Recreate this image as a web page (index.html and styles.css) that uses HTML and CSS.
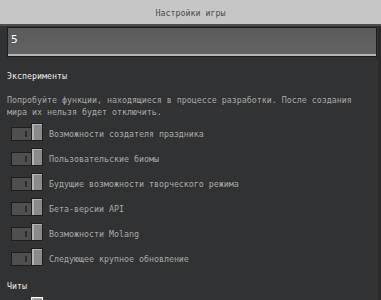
FILE: index.html
```html
<!DOCTYPE html>
<html lang="ru">
<head>
    <meta charset="UTF-8">
    <meta name="viewport" content="width=device-width, initial-scale=1.0">
    <title>Настройки игры</title>
    <link rel="stylesheet" href="styles.css">
</head>
<body>
    <div class="header">Настройки игры</div>
    <div class="page">
        <div class="content">
            <div class="input">5</div>
            <div class="section-title">Эксперименты</div>
            <div class="desc">Попробуйте функции, находящиеся в процессе разработки. После создания мира их нельзя будет отключить.</div>
            <div class="toggles">
                <div class="row"><div class="toggle"><span class="track"></span><span class="knob"></span></div><span class="label">Возможности создателя праздника</span></div>
                <div class="row"><div class="toggle"><span class="track"></span><span class="knob"></span></div><span class="label">Пользовательские биомы</span></div>
                <div class="row"><div class="toggle"><span class="track"></span><span class="knob"></span></div><span class="label">Будущие возможности творческого режима</span></div>
                <div class="row"><div class="toggle"><span class="track"></span><span class="knob"></span></div><span class="label">Бета-версии API</span></div>
                <div class="row"><div class="toggle"><span class="track"></span><span class="knob"></span></div><span class="label">Возможности Molang</span></div>
                <div class="row"><div class="toggle"><span class="track"></span><span class="knob"></span></div><span class="label">Следующее крупное обновление</span></div>
            </div>
            <div class="section-title cheats">Читы</div>
            <div class="row"><div class="toggle"><span class="track"></span><span class="knob knob-on"></span></div></div>
        </div>
        <div class="scrollbar"></div>
    </div>
</body>
</html>
```

FILE: styles.css
```css
body {
    margin: 0;
    background-color: #313233;
    font-family: 'DejaVu Sans Mono', 'Liberation Mono', monospace;
    font-size: 8.3px;
    overflow: hidden;
    height: 300px;
}
.header {
    height: 24px;
    line-height: 27px;
    background: #c6c6c6;
    border-bottom: 2px solid #4e4e4f;
    text-align: center;
    color: #4c4c4c;
}
.page {
    display: flex;
    height: 274px;
}
.content {
    flex: 1;
    padding: 1px 1px 0 7px;
}
.scrollbar {
    width: 3px;
    background: #2a2a2b;
}
.input {
    border: 1px solid #1c1c1d;
    background: linear-gradient(to bottom, #5a5a5a, #636363);
    box-shadow: inset 0 -2px 0 #b5b5b5;
    color: #ffffff;
    font-size: 11px;
    line-height: 12px;
    padding: 6px 3px 0;
    box-sizing: border-box;
    height: 30px;
}
.section-title {
    color: #e8e8e8;
    line-height: 12px;
    margin-top: 13px;
}
.desc {
    color: #a9a9a9;
    line-height: 12px;
    margin-top: 12px;
    padding-right: 20px;
}
.toggles {
    display: flex;
    flex-direction: column;
    gap: 7px;
    margin-top: 5px;
    padding-left: 4px;
}
.row {
    display: flex;
    align-items: flex-end;
    height: 18px;
}
.toggle {
    position: relative;
    width: 32px;
    height: 18px;
    flex: none;
}
.track {
    position: absolute;
    left: 0;
    bottom: 0;
    width: 32px;
    height: 14px;
    box-sizing: border-box;
    background: #4f4f50;
    border: 1px solid #1e1e1f;
}
.track::after {
    content: '';
    position: absolute;
    left: 13px;
    top: 3px;
    width: 2px;
    height: 6px;
    background: #2c2c2d;
}
.knob {
    position: absolute;
    right: 0;
    top: 0;
    width: 12px;
    height: 18px;
    box-sizing: border-box;
    background: #8b8b8c;
    border: 1px solid #1e1e1f;
    box-shadow: inset 2px 1px 0 #b4b4b4;
}
.knob-on {
    border-color: #ffffff;
}
.label {
    color: #a9a9a9;
    line-height: 14px;
    margin-left: 6px;
}
.cheats {
    margin-top: 14px;
}
.cheats + .row {
    margin-top: 5px;
    padding-left: 4px;
}
```
